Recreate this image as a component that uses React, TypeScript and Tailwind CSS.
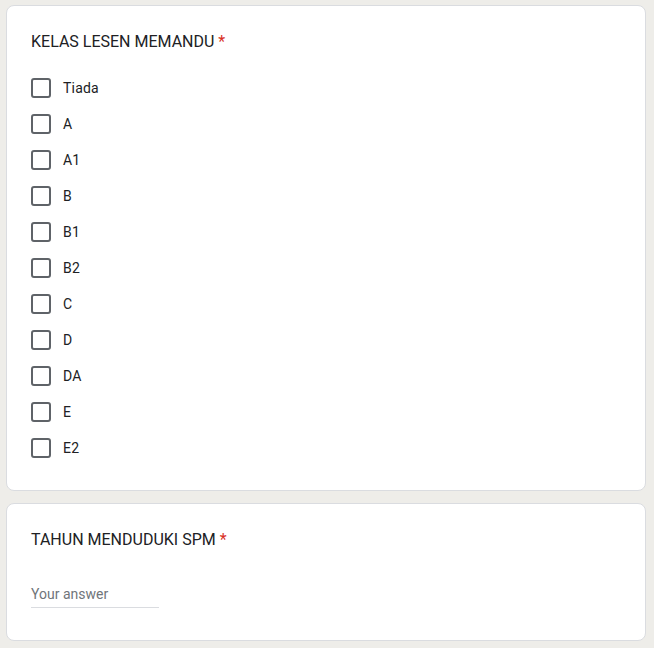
const options = ["Tiada", "A", "A1", "B", "B1", "B2", "C", "D", "DA", "E", "E2"];

export default function App() {
  return (
    <div className="min-h-[648px] bg-[#eeede9] pl-[6px] pr-[8px] pt-[5px] pb-2 font-['Roboto',sans-serif] text-[#202124]">
      {/* Checkbox question */}
      <div className="rounded-lg border border-[#dadce0] bg-white px-6 pt-6 pb-6">
        <div className="text-base leading-6">
          KELAS LESEN MEMANDU <span className="text-[#d93025]">*</span>
        </div>
        <div className="mt-4 flex flex-col">
          {options.map((opt) => (
            <label key={opt} className="flex h-9 items-center gap-3">
              <span className="h-5 w-5 rounded-[3px] border-2 border-[#5f6368]" />
              <span className="text-sm tracking-[0.2px]">{opt}</span>
            </label>
          ))}
        </div>
      </div>

      {/* Short answer question */}
      <div className="mt-3 rounded-lg border border-[#dadce0] bg-white px-6 pt-6 pb-8">
        <div className="text-base leading-6">
          TAHUN MENDUDUKI SPM <span className="text-[#d93025]">*</span>
        </div>
        <div className="mt-8 w-32 border-b border-[#dadce0] pb-[3px] text-sm leading-5 text-[#70757a]">
          Your answer
        </div>
      </div>
    </div>
  );
}
